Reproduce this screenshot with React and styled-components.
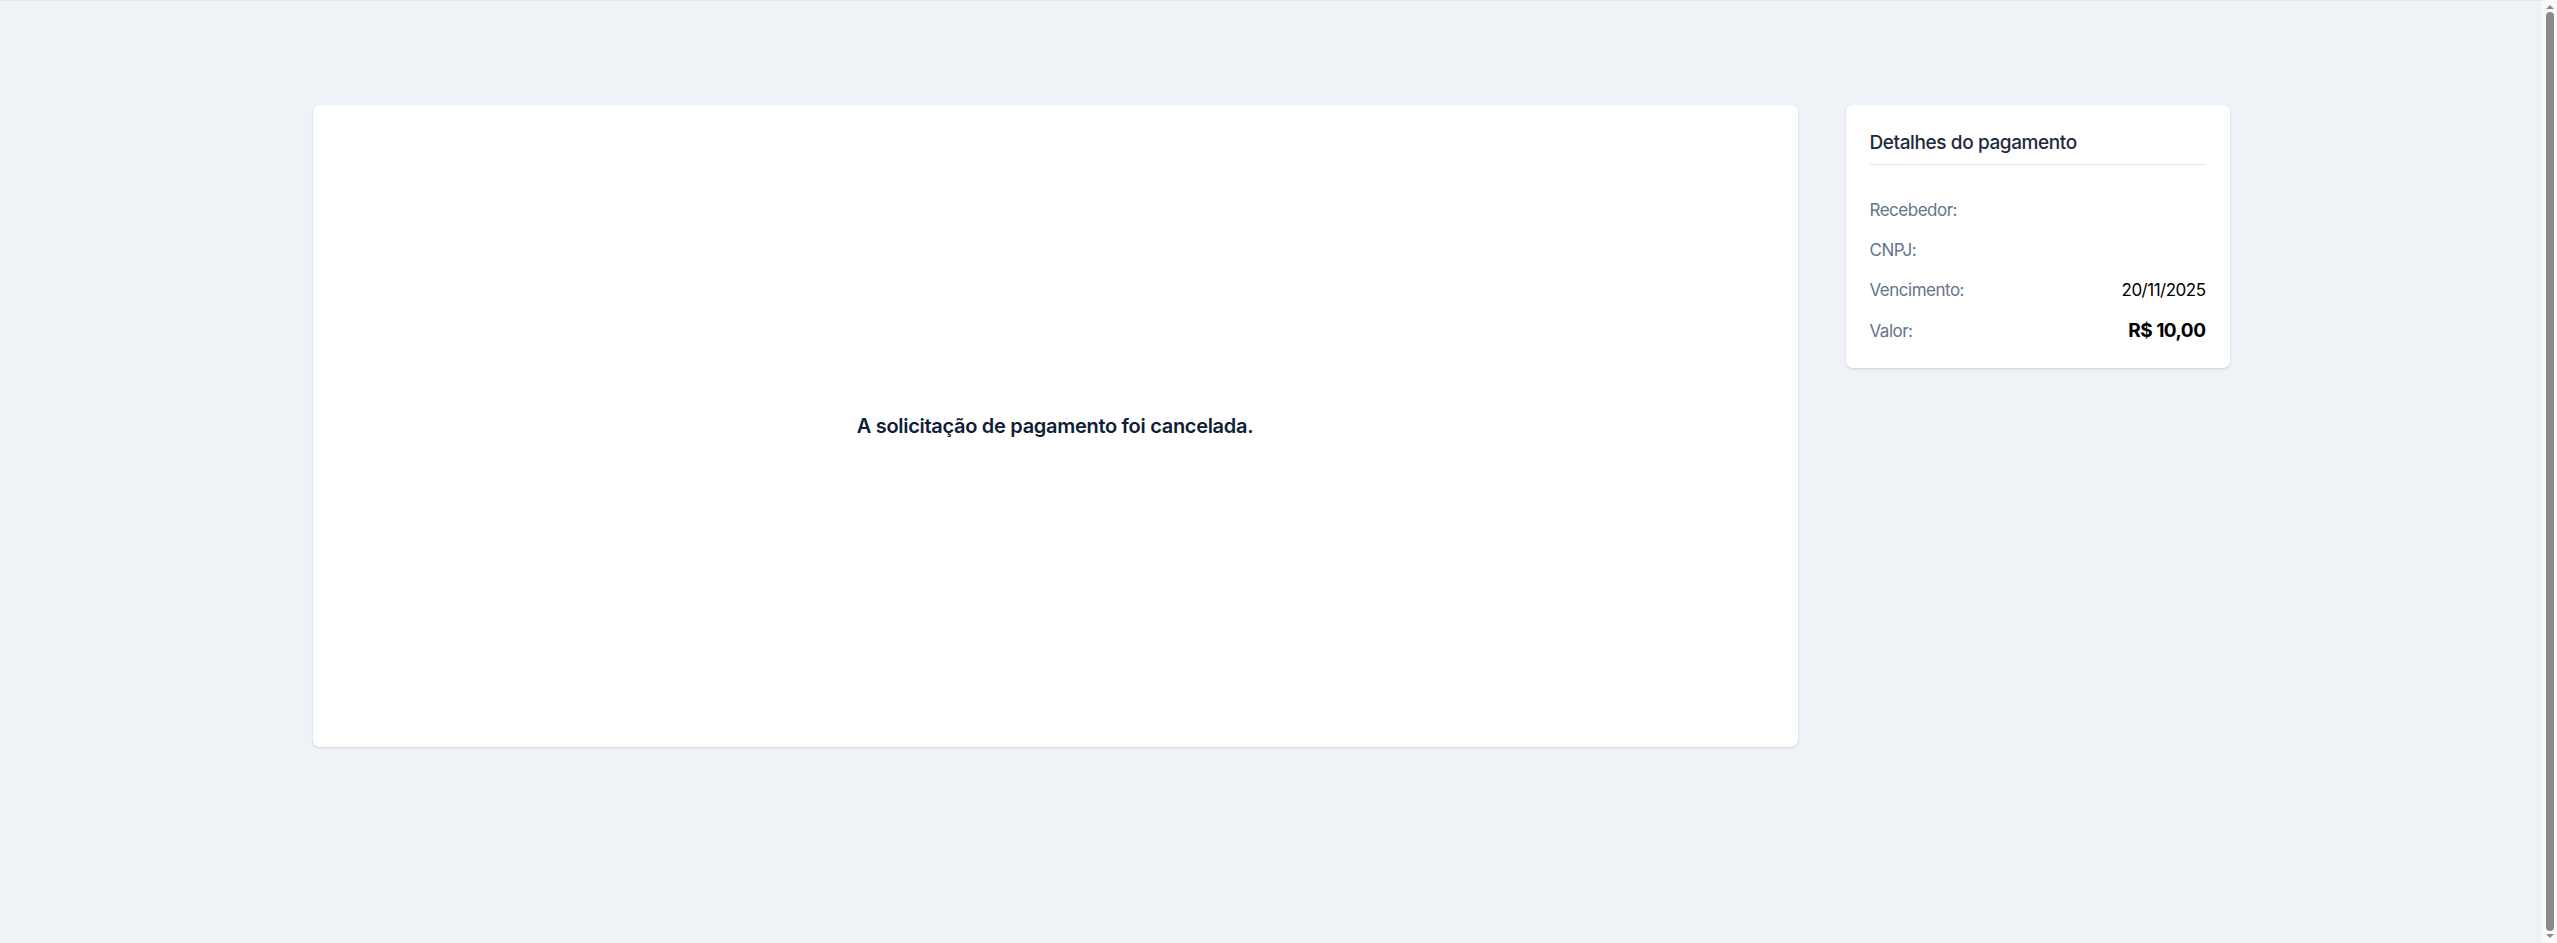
import React from "react";
import styled, { createGlobalStyle } from "styled-components";

const GlobalStyle = createGlobalStyle`
  html, body {
    margin: 0;
    padding: 0;
    background: #eff2f7;
    overflow: hidden;
  }
  body {
    font-family: Inter, "Noto Sans", "Liberation Sans", sans-serif;
    color: #0f172a;
  }
`;

const Page = styled.div`
  min-height: 100vh;
  box-sizing: border-box;
  border-top: 1px solid #e6e1ea;
  padding: 104px 15px 0 0;
  display: flex;
  justify-content: center;
  align-items: flex-start;
  gap: 48px;
`;

const StatusCard = styled.section`
  width: 1485px;
  height: 642px;
  background: #ffffff;
  border-radius: 7px;
  box-shadow: 0 1px 3px rgba(15, 23, 42, 0.1), 0 1px 2px rgba(15, 23, 42, 0.06);
  display: flex;
  align-items: center;
  justify-content: center;
`;

const StatusText = styled.p`
  margin: 0;
  font-size: 20px;
  font-weight: 600;
  letter-spacing: -0.3px;
  color: #0f1d38;
`;

const DetailsCard = styled.aside`
  width: 384px;
  box-sizing: border-box;
  padding: 24px;
  background: #ffffff;
  border-radius: 7px;
  box-shadow: 0 1px 3px rgba(15, 23, 42, 0.1), 0 1px 2px rgba(15, 23, 42, 0.06);
`;

const DetailsTitle = styled.h2`
  margin: 0 0 33px;
  padding-bottom: 7px;
  border-bottom: 1px solid #e2e8f0;
  font-size: 19px;
  line-height: 28px;
  font-weight: 500;
  letter-spacing: -0.4px;
  color: #1e293b;
`;

const DetailsList = styled.dl`
  margin: 0;
  display: flex;
  flex-direction: column;
  gap: 16px;
`;

const Row = styled.div`
  display: flex;
  justify-content: space-between;
  align-items: center;
  min-height: 24px;
`;

const Label = styled.dt`
  font-size: 17px;
  line-height: 24px;
  letter-spacing: -0.5px;
  color: #64748b;
`;

const Value = styled.dd`
  margin: 0;
  font-size: ${(p) => (p.$strong ? "19px" : "17px")};
  line-height: ${(p) => (p.$strong ? "26px" : "24px")};
  font-weight: ${(p) => (p.$strong ? 700 : 400)};
  letter-spacing: -0.5px;
  color: #000000;
`;

/* browser scrollbar, drawn since the headless shot hides it */
const Scrollbar = styled.div`
  position: fixed;
  top: 0;
  right: 0;
  width: 15px;
  height: 100vh;
  background: #f9f9f9;
  display: flex;
  flex-direction: column;
  align-items: center;
  padding: 5px 0;
  box-sizing: border-box;
  gap: 3px;
`;

const Arrow = styled.span`
  width: 0;
  height: 0;
  border-left: 4px solid transparent;
  border-right: 4px solid transparent;
  ${(p) =>
    p.$down
      ? "border-top: 4px solid #8a8a8a;"
      : "border-bottom: 4px solid #8a8a8a;"}
`;

const Thumb = styled.span`
  flex: 1;
  width: 8px;
  border-radius: 4px;
  background: #8a8a8a;
`;

const details = [
  { label: "Recebedor:", value: "" },
  { label: "CNPJ:", value: "" },
  { label: "Vencimento:", value: "20/11/2025" },
  { label: "Valor:", value: "R$ 10,00", strong: true },
];

const App = () => {
  return (
    <>
      <GlobalStyle />
      <Page>
        <StatusCard>
          <StatusText>A solicitação de pagamento foi cancelada.</StatusText>
        </StatusCard>
        <DetailsCard>
          <DetailsTitle>Detalhes do pagamento</DetailsTitle>
          <DetailsList>
            {details.map((item) => (
              <Row key={item.label}>
                <Label>{item.label}</Label>
                <Value $strong={item.strong}>{item.value}</Value>
              </Row>
            ))}
          </DetailsList>
        </DetailsCard>
      </Page>
      <Scrollbar>
        <Arrow />
        <Thumb />
        <Arrow $down />
      </Scrollbar>
    </>
  );
};

export default App;
